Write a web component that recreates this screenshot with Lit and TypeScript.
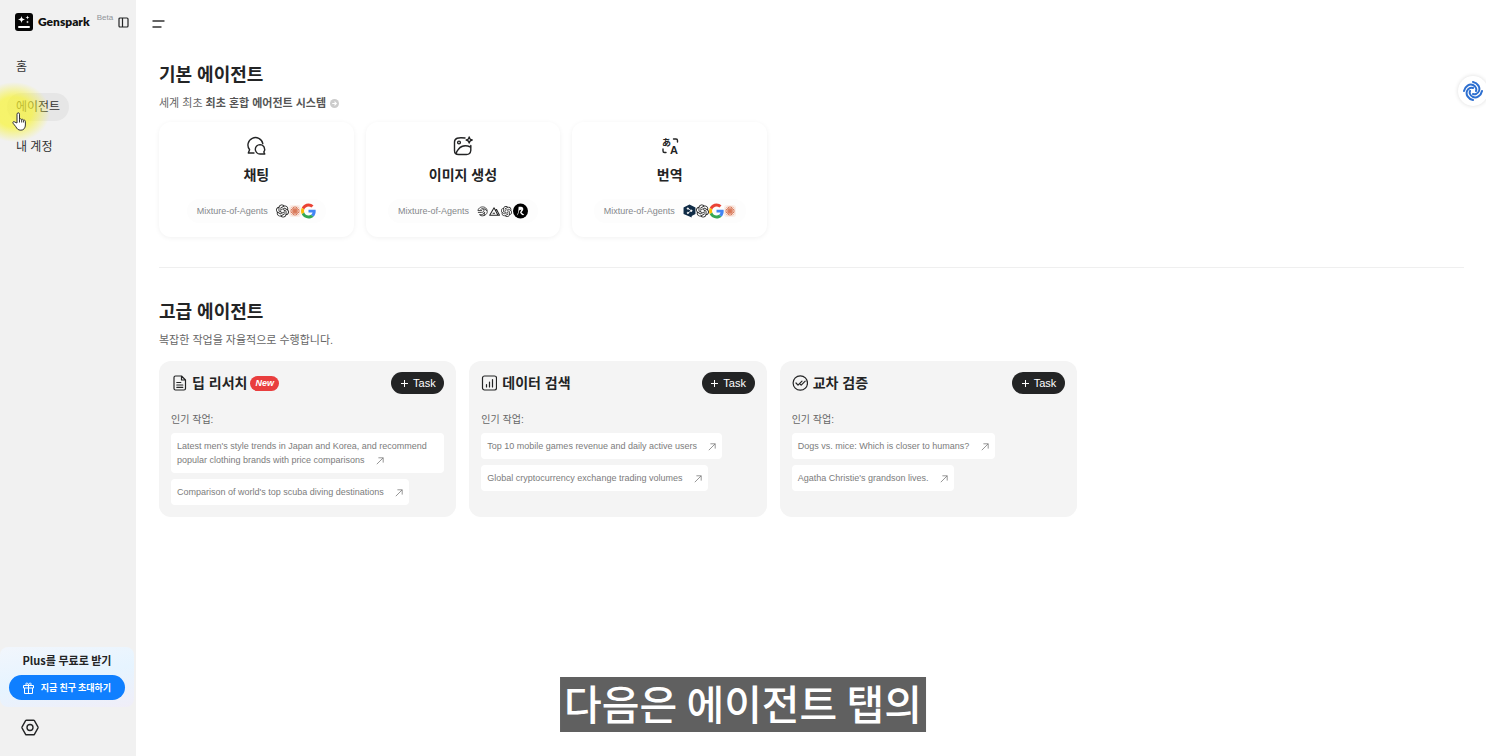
import { LitElement, html, css, svg } from "lit";
import { customElement } from "lit/decorators.js";

const openai = svg`<path fill="currentColor" d="M22.2819 9.8211a5.9847 5.9847 0 0 0-.5157-4.9108 6.0462 6.0462 0 0 0-6.5098-2.9A6.0651 6.0651 0 0 0 4.9807 4.1818a5.9847 5.9847 0 0 0-3.9977 2.9 6.0462 6.0462 0 0 0 .7427 7.0966 5.98 5.98 0 0 0 .511 4.9107 6.051 6.051 0 0 0 6.5146 2.9001A5.9847 5.9847 0 0 0 13.2599 24a6.0557 6.0557 0 0 0 5.7718-4.2058 5.9894 5.9894 0 0 0 3.9977-2.9001 6.0557 6.0557 0 0 0-.7475-7.0729zm-9.022 12.6081a4.4755 4.4755 0 0 1-2.8764-1.0408l.1419-.0804 4.7783-2.7582a.7948.7948 0 0 0 .3927-.6813v-6.7369l2.02 1.1686a.071.071 0 0 1 .038.052v5.5826a4.504 4.504 0 0 1-4.4945 4.4944zm-9.6607-4.1254a4.4708 4.4708 0 0 1-.5346-3.0137l.142.0852 4.783 2.7582a.7712.7712 0 0 0 .7806 0l5.8428-3.3685v2.3324a.0804.0804 0 0 1-.0332.0615L9.74 19.9502a4.4992 4.4992 0 0 1-6.1408-1.6464zM2.3408 7.8956a4.485 4.485 0 0 1 2.3655-1.9728V11.6a.7664.7664 0 0 0 .3879.6765l5.8144 3.3543-2.0201 1.1685a.0757.0757 0 0 1-.071 0l-4.8303-2.7865A4.504 4.504 0 0 1 2.3408 7.872zm16.5963 3.8558L13.1038 8.364 15.1192 7.2a.0757.0757 0 0 1 .071 0l4.8303 2.7913a4.4944 4.4944 0 0 1-.6765 8.1042v-5.6772a.79.79 0 0 0-.407-.667zm2.0107-3.0231l-.142-.0852-4.7735-2.7818a.7759.7759 0 0 0-.7854 0L9.409 9.2297V6.8974a.0662.0662 0 0 1 .0284-.0615l4.8303-2.7866a4.4992 4.4992 0 0 1 6.6802 4.66zM8.3065 12.863l-2.02-1.1638a.0804.0804 0 0 1-.038-.0567V6.0742a4.4992 4.4992 0 0 1 7.3757-3.4537l-.142.0805L8.704 5.459a.7948.7948 0 0 0-.3927.6813zm1.0976-2.3654l2.602-1.4998 2.6069 1.4998v2.9994l-2.5974 1.4997-2.6067-1.4997Z"/>`;

const logo = {
  openai: html`<svg class="m14" viewBox="0 0 24 24">${openai}</svg>`,
  openaiSmall: html`<svg class="m11" viewBox="0 0 24 24">${openai}</svg>`,
  claude: html`<svg class="m12" viewBox="0 0 24 24"><rect width="24" height="24" rx="6" fill="#fbeee8"/><g stroke="#d97757" stroke-width="2" stroke-linecap="round"><path d="M12 3v18M3 12h18M6 5.500l12 13M18 5.500l-12 13M8.500 4l7 16M15.500 4l-7 16M4 8.500l16 7M4 15.500l16-7"/></g></svg>`,
  google: html`<svg class="m16" viewBox="0 0 48 48"><path fill="#EA4335" d="M24 9.500c3.540 0 6.710 1.220 9.210 3.600l6.850-6.850C35.900 2.380 30.470 0 24 0 14.620 0 6.510 5.380 2.560 13.220l7.980 6.190C12.430 13.720 17.740 9.500 24 9.500z"/><path fill="#4285F4" d="M46.980 24.550c0-1.570-.15-3.090-.38-4.550H24v9.020h12.940c-.58 2.960-2.260 5.480-4.780 7.180l7.730 6c4.510-4.180 7.090-10.360 7.090-17.650z"/><path fill="#FBBC05" d="M10.530 28.590c-.48-1.450-.76-2.990-.76-4.590s.27-3.140.76-4.590l-7.980-6.190C.92 16.460 0 20.120 0 24c0 3.880.92 7.540 2.560 10.780l7.970-6.190z"/><path fill="#34A853" d="M24 48c6.480 0 11.930-2.130 15.890-5.810l-7.730-6c-2.150 1.450-4.920 2.300-8.160 2.300-6.260 0-11.570-4.220-13.470-9.910l-7.980 6.190C6.510 42.620 14.620 48 24 48z"/></svg>`,
  swirl: html`<svg class="m11" viewBox="0 0 24 24" fill="none" stroke="currentColor" stroke-width="1.800"><path d="M2 10C3 4 10 0 17 3c6 3 7 11 3 15s-11 5-14 1M2 10h9M2 14h8c4 0 6-3 5-6s-6-3-7 0M5 19c6 1 10-2 12-5M12 7c4-2 8 0 9 4M16 13v8"/></svg>`,
  ideogram: html`<svg class="m11" viewBox="0 0 24 24" fill="none" stroke="currentColor" stroke-width="2.200" stroke-linejoin="round"><path d="M1.500 20 11 4l8.500 16zM15 9l1.500-1.500L23 20h-4M8 16h5"/></svg>`,
  recraft: html`<svg class="m16" viewBox="0 0 32 32"><circle cx="16" cy="16" r="16" fill="#000"/><path fill="#fff" d="M12 7h5a5 5 0 0 1 4 8l-3 4 6 5c-3 2-6 0-8-3l-1-2 3-6-5 2-1 5-3 5H8l3-6z"/></svg>`,
  deepl: html`<svg class="m14" viewBox="0 0 24 24"><path fill="#0f2b46" d="M12 0 23 5.500v12L16 21v3l-4-2L1 17.500v-12z"/><g fill="#fff" stroke="#fff" stroke-width="1.400"><circle cx="9" cy="7.500" r="1.300"/><circle cx="15.500" cy="11.500" r="1.300"/><circle cx="9" cy="15.500" r="1.300"/><path fill="none" d="m9 7.500 6.500 4L9 15.500"/></g></svg>`,
};

const arrow = html`<svg class="arrow" viewBox="0 0 10 10" fill="none" stroke="currentColor"><path d="M1 9 9 1M3 1h6v6"/></svg>`;
const plus = html`<svg class="plus" viewBox="0 0 9 9" fill="none" stroke="currentColor"><path d="M4.500 1v7M1 4.500h7"/></svg>`;

const basicAgents = [
  {
    name: "채팅",
    icon: svg`<path d="M8 17H2.300l1.300-3.200A7.500 7.500 0 1 1 16.800 7.600"/><path d="M14 8.600a4.700 4.700 0 1 0 0 9.400h4.800l-1-2a4.700 4.700 0 0 0-3.800-7.400z"/>`,
    models: [logo.openai, logo.claude, logo.google],
  },
  {
    name: "이미지 생성",
    icon: svg`<path d="M12 2Q1.500.500 1.500 6v8.500c0 2.500 1.500 4 4 4h8c2.500 0 4-1.500 4.300-4V9.500"/><path d="M3 17.500c3-7 7.500-9.500 14.500-6.500"/><circle cx="6" cy="6.500" r="1.400"/><path d="M16.200 1c.3 2 1 2.700 3 3-2 .3-2.700 1-3 3-.3-2-1-2.700-3-3 2-.3 2.700-1 3-3z"/>`,
    models: [logo.swirl, logo.ideogram, logo.openaiSmall, logo.recraft],
  },
  {
    name: "번역",
    icon: svg`<path d="M13.500 3H16a1.500 1.500 0 0 1 1.500 1.500V6M3 13v2A1.500 1.500 0 0 0 4.500 16.500H6"/><g fill="currentColor" stroke="none" font-weight="700"><text x="2" y="10" font-size="9" font-family="Noto Sans CJK JP, sans-serif">あ</text><text x="10" y="18" font-size="11" font-family="Liberation Sans, sans-serif">A</text></g>`,
    models: [logo.deepl, logo.openai, logo.google, logo.claude],
  },
];

const advancedAgents = [
  {
    name: "딥 리서치",
    isNew: true,
    icon: svg`<path d="M10.500 1H4.500Q3 1 3 2.500v11Q3 15 4.500 15h8.500Q14.500 15 14.500 13.500V5zM10.500 1v4h4M5.800 7.500h4M5.800 10h6M5.800 12.300h6"/>`,
    tasks: [
      "Latest men's style trends in Japan and Korea, and recommend popular clothing brands with price comparisons",
      "Comparison of world's top scuba diving destinations",
    ],
  },
  {
    name: "데이터 검색",
    isNew: false,
    icon: svg`<rect x="1.500" y="1" width="14" height="14" rx="2"/><path d="M5.500 9.500V12M8.500 7v5M11.500 4.500V12"/>`,
    tasks: ["Top 10 mobile games revenue and daily active users", "Global cryptocurrency exchange trading volumes"],
  },
  {
    name: "교차 검증",
    isNew: false,
    icon: svg`<circle cx="8.300" cy="8" r="7.200"/><path d="m4 8 2 2.200 4-4M8.300 9.300l.9.900 4-4"/>`,
    tasks: ["Dogs vs. mice: Which is closer to humans?", "Agatha Christie's grandson lives."],
  },
];

@customElement("app-sidebar")
class AppSidebar extends LitElement {
  static styles = css`
    :host { display: flex; flex-direction: column; width: 136px; flex: none; background: #f1f1f1; color: #232425; }
    .brand { display: flex; align-items: center; height: 20px; margin: 12px 0 0 15px; }
    .logo { width: 18px; height: 18px; }
    .name { margin-left: 5px; font: 800 12px/20px Lato, sans-serif; color: #111; }
    .beta { margin: 0 5px 8px 7px; font-size: 8px; line-height: 10px; color: #909499; }
    button { font: inherit; border: 0; padding: 0; background: none; color: inherit; cursor: pointer; }
    .toggle { display: flex; }
    .toggle svg { width: 11px; height: 11px; }
    nav { display: flex; flex-direction: column; align-items: flex-start; gap: 12px; margin: 21px 7px; }
    nav a { padding: 0 9px; border-radius: 14px; font-size: 12px; line-height: 28px; color: #333; text-decoration: none; }
    nav .active { background: #e6e6e6; }
    .promo { display: flex; flex-direction: column; gap: 6px; margin: auto 2px 0 0; padding: 5px 9px 7px; background: linear-gradient(170deg, #f2f6fc, #e6f4ff 50%, #f0eef8); text-align: center; border-radius: 8px; }
    .promo p { margin: 0; font: 700 11px/17px "Noto Sans CJK KR", sans-serif; }
    .invite { display: flex; align-items: center; justify-content: center; gap: 7px; height: 25px; border-radius: 13px; background: #0f7fff; color: #fff; font: 700 9px/14px "Noto Sans CJK KR", sans-serif; }
    .invite svg { width: 11px; height: 12px; }
    .settings { display: flex; margin: 12px 0 20px 21px; width: 18px; }
    .settings svg { width: 18px; height: 17px; }
  `;
  render() {
    return html`
      <div class="brand">
        <svg class="logo" viewBox="0 0 18 18"><rect width="18" height="18" rx="3" fill="#060606"/><path fill="#fff" d="M6.500 3c.5 2.300 1.200 3 3.500 3.500C7.700 7 7 7.700 6.500 10 6 7.700 5.300 7 3 6.500 5.300 6 6 5.300 6.500 3zM12.500 2.500c.2 1.300.7 1.800 2 2-1.300.2-1.800.7-2 2-.2-1.300-.7-1.800-2-2 1.300-.2 1.800-.7 2-2zM12.500 7.500c.2 1 .5 1.300 1.500 1.500-1 .2-1.300.5-1.500 1.500-.2-1-.5-1.300-1.500-1.500 1-.2 1.300-.5 1.500-1.500z"/><rect x="3" y="13" width="12" height="2" rx="1" fill="#fff"/></svg>
        <span class="name">Genspark</span><span class="beta">Beta</span>
        <button class="toggle" aria-label="사이드바"><svg viewBox="0 0 11 11" fill="none" stroke="currentColor" stroke-width="1.200"><rect x="1" y="1" width="9" height="9" rx="1"/><path d="M4.500 1v9"/></svg></button>
      </div>
      <nav><a href="#home">홈</a><a class="active" href="#agents">에이전트</a><a href="#me">내 계정</a></nav>
      <div class="promo">
        <p>Plus를 무료로 받기</p>
        <button class="invite"><svg viewBox="0 0 11 12" fill="none" stroke="currentColor"><path d="M.5 3.500h10v2.500H.5zM1.500 6v5.500h8V6M5.500 3.500v8M5.500 3.500C3 3.500 2.500 2.500 3 1.500s2.500-.5 2.500 2c0-2.500 2-3 2.500-2s0 2-2.500 2"/></svg>지금 친구 초대하기</button>
      </div>
      <button class="settings" aria-label="설정"><svg viewBox="0 0 18 17" fill="none" stroke="currentColor" stroke-width="1.400" stroke-linejoin="round"><path d="M5.500 1.200h7q.6 0 .9.500l3.500 6.200q.3.600 0 1.200l-3.500 6.200q-.3.500-.9.500h-7q-.6 0-.9-.5L1.100 9.100q-.3-.6 0-1.200l3.500-6.200q.3-.5.900-.5z"/><circle cx="9" cy="8.500" r="3"/></svg></button>
    `;
  }
}

@customElement("app-root")
class AppRoot extends LitElement {
  static styles = css`
    :host { display: flex; position: relative; min-height: 100vh; overflow: hidden; background: #fff; color: #232425; font-family: "Liberation Sans", "Noto Sans CJK KR", sans-serif; }
    main { flex: 1; min-width: 0; padding: 17px 22px 24px 23px; }
    button { font: inherit; border: 0; cursor: pointer; }
    .menu { display: flex; margin-left: -7px; padding: 0; background: none; color: #333; }
    .menu svg { width: 13px; height: 13px; }
    h2 { margin: 0; font-size: 18px; line-height: 24px; font-weight: 700; }
    .basic h2 { margin-top: 33px; }
    .sub { display: flex; align-items: center; gap: 4px; margin: 8px 0 11px; font-size: 11px; line-height: 16px; color: #666; }
    .sub b { color: #555; }
    .info { width: 9px; height: 9px; }
    .basic-cards { display: grid; grid-template-columns: repeat(3, 1fr); gap: 12px; max-width: 608px; }
    .basic-card { display: flex; flex-direction: column; align-items: center; padding: 14px 8px; border-radius: 12px; box-shadow: 0 1px 5px rgba(0, 0, 0, 0.06); color: inherit; text-decoration: none; }
    .basic-card > svg { width: 20px; height: 20px; overflow: visible; }
    .basic-card h3 { margin: 9px 0 14px; font-size: 14px; line-height: 20px; }
    .moa { display: flex; align-items: center; gap: 8px; height: 24px; padding: 0 10px; border-radius: 12px; background: #fdfdfd; font-size: 9px; color: #85888c; }
    .models { display: flex; align-items: center; color: #222; }
    .m11 { width: 11px; height: 11px; margin: 0 1px 0 0; }
    .m12 { width: 12px; height: 12px; }
    .m14 { width: 13px; height: 14px; }
    .m16 { width: 15px; height: 16px; }
    hr { height: 1px; margin: 30px 0 32px; border: 0; background: #efefef; }
    .advanced .sub { margin-bottom: 13px; }
    .advanced-cards { display: grid; grid-template-columns: repeat(3, 1fr); gap: 13px; max-width: 918px; }
    .card { padding: 11px 12px 12px; border-radius: 12px; background: #f4f4f4; }
    .head { display: flex; align-items: center; height: 22px; }
    .head svg.icon { width: 16px; height: 16px; margin-right: 5px; }
    .head h3 { margin: 0; font-size: 14px; line-height: 20px; }
    .new { margin-left: 3px; padding: 0 5px; border-radius: 8px; background: #e93e3e; color: #fff; font-size: 9px; line-height: 15px; font-weight: 700; font-style: italic; }
    .task { display: flex; align-items: center; justify-content: center; gap: 4px; margin-left: auto; width: 53px; height: 22px; padding: 0; border-radius: 11px; background: #232425; color: #fff; font-size: 11px; }
    .plus { width: 9px; height: 9px; }
    .label { margin: 19px 0 6px; font-size: 10px; line-height: 14px; color: #666; }
    .tasks { display: flex; flex-direction: column; align-items: flex-start; gap: 6px; margin: 0; padding: 0; list-style: none; }
    .tasks a { display: block; padding: 6px; border-radius: 4px; background: #fff; font-size: 9px; line-height: 14px; color: #7c7c7c; text-decoration: none; }
    .arrow { width: 8px; height: 8px; margin-left: 9px; vertical-align: middle; }
    .assist { position: absolute; top: 76px; right: -2px; display: flex; padding: 5px; border-radius: 50%; background: #fff; box-shadow: 0 0 4px rgba(0, 0, 0, 0.14); }
    .assist svg { width: 20px; height: 20px; }
    .glow { position: absolute; left: -22px; top: 82px; width: 72px; height: 60px; border-radius: 50%; background: radial-gradient(closest-side, rgba(248, 244, 50, 0.7) 50%, rgba(250, 248, 80, 0)); pointer-events: none; }
    .cursor { position: absolute; left: 12px; top: 112px; width: 14px; height: 19px; pointer-events: none; }
    .caption { position: absolute; left: 50%; bottom: 24px; transform: translateX(-50%); margin: 0; padding: 0 4px 4px; background: #606060; color: #fff; font: 500 41px/51px "Noto Sans CJK KR", sans-serif; white-space: nowrap; }
  `;
  render() {
    return html`
      <app-sidebar></app-sidebar>
      <main>
        <button class="menu" aria-label="메뉴"><svg viewBox="0 0 13 13" fill="none" stroke="currentColor" stroke-width="1.400" stroke-linecap="round"><path d="M1 4h11M1 10h8"/></svg></button>
        <section class="basic">
          <h2>기본 에이전트</h2>
          <div class="sub"><span>세계 최초 <b>최초 혼합 에어전트 시스템</b></span><svg class="info" viewBox="0 0 10 10"><circle cx="5" cy="5" r="5" fill="#ccc"/><path d="M2.500 5h4M5 3l2 2-2 2" fill="none" stroke="#fff" stroke-width="1.200"/></svg></div>
          <div class="basic-cards">
            ${basicAgents.map((a) => html`<a class="basic-card" href="#agent">
              <svg viewBox="0 0 20 20" fill="none" stroke="currentColor" stroke-width="1.400" stroke-linecap="round" stroke-linejoin="round">${a.icon}</svg>
              <h3>${a.name}</h3>
              <div class="moa"><span>Mixture-of-Agents</span><span class="models">${a.models}</span></div>
            </a>`)}
          </div>
        </section>
        <hr />
        <section class="advanced">
          <h2>고급 에이전트</h2>
          <p class="sub">복잡한 작업을 자율적으로 수행합니다.</p>
          <div class="advanced-cards">
            ${advancedAgents.map((a) => html`<article class="card">
              <div class="head">
                <svg class="icon" viewBox="0 0 16 16" fill="none" stroke="currentColor" stroke-width="1.200" stroke-linecap="round" stroke-linejoin="round">${a.icon}</svg>
                <h3>${a.name}</h3>
                ${a.isNew ? html`<span class="new">New</span>` : ""}
                <button class="task">${plus}Task</button>
              </div>
              <p class="label">인기 작업:</p>
              <ul class="tasks">${a.tasks.map((t) => html`<li><a href="#task">${t} ${arrow}</a></li>`)}</ul>
            </article>`)}
          </div>
        </section>
      </main>
      <button class="assist" aria-label="도우미"><svg viewBox="-10 -10 20 20" fill="none" stroke="#2d6fd0" stroke-width="2" stroke-linecap="round">${[0, 90, 180, 270].map((r) => svg`<path transform="rotate(${r})" d="M-9 0C-8.500-2.500-7.300-4.200-5.400-5.400S-1.800-6.700 0-6 2.500-4.300 3-3 3.400-.8 3 0"/>`)}</svg></button>
      <div class="glow"></div>
      <svg class="cursor" viewBox="0 0 14 19"><path d="M5 11V2.200c0-1.900 2.500-1.900 2.500 0V7.500c.3-1 2-.9 2.200.3.500-.8 1.800-.5 1.900.6.600-.5 1.800-.2 1.800 1V13c0 3-1.700 5.200-4.500 5.200-3 0-4-1.600-5-3.400L1 11.200c-.6-1.400.9-2.200 1.900-1.100z" fill="#fff" stroke="#333" stroke-linejoin="round"/><path d="M7.500 7.500v3M9.700 8v2.500M11.600 8.500v2" stroke="#333"/></svg>
      <p class="caption">다음은 에이전트 탭의</p>
    `;
  }
}
